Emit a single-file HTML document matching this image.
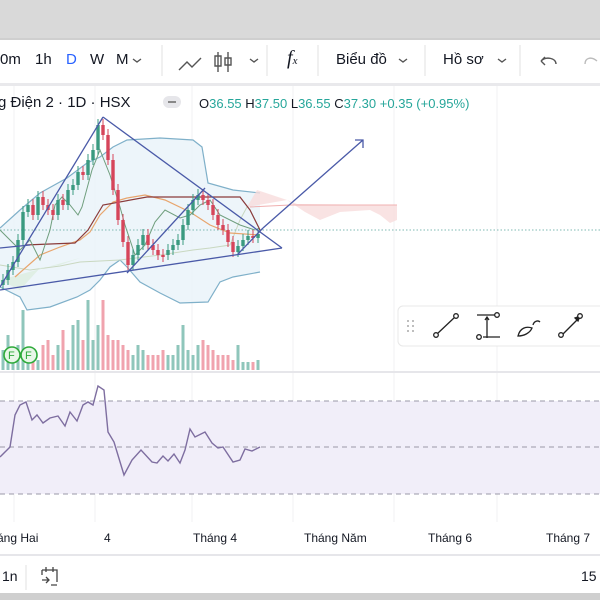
<!DOCTYPE html>
<html><head><meta charset="utf-8"><style>
body{margin:0;width:600px;height:600px;overflow:hidden;background:#fff;font-family:"Liberation Sans","Noto Sans CJK SC",sans-serif;position:relative}
.t{position:absolute;white-space:nowrap;color:#131722}
</style></head><body>
<div style="position:absolute;left:0;top:0;width:600px;height:38px;background:#d9d9d9"></div>
<div style="position:absolute;left:0;top:38px;width:600px;height:2px;background:#cfcfcf"></div>
<div style="position:absolute;left:0;top:83px;width:600px;height:3px;background:#e9e9ec"></div>
<div class="t" style="left:0;top:51px;font-size:15px">0m</div>
<div class="t" style="left:35px;top:51px;font-size:15px">1h</div>
<div class="t" style="left:66px;top:51px;font-size:15px;color:#2962ff">D</div>
<div class="t" style="left:90px;top:51px;font-size:15px">W</div>
<div class="t" style="left:116px;top:51px;font-size:15px">M</div>
<div class="t" style="left:336px;top:51px;font-size:15px">Biểu đồ</div>
<div class="t" style="left:443px;top:51px;font-size:15px">Hồ sơ</div>
<div class="t" style="left:287px;top:47px;font-size:20px;font-family:'Liberation Serif',serif;font-style:italic">f<span style="font-size:11px">x</span></div>
<svg style="position:absolute;left:0;top:0" width="600" height="600">
<g stroke="#555" stroke-width="1.4" fill="none">
<path d="M133 59l4 3 4-3M250 59l4 3 4-3M399 59l4 3 4-3M498 59l4 3 4-3"/>
<path d="M179 70l8-8 5 5 9-9"/>
<path d="M218 52v20M215 56h6v10h-6zM228 52v20M225 58h6v7h-6z"/>
<path d="M556 64c0-6-10-8-15-3M541 61l4-4M541 61l4 4"/>
<path d="M585 64c0-6 6-8 12-3" stroke="#bbb"/>
</g>
<g stroke="#e0e0e0"><line x1="162" y1="45" x2="162" y2="76"/><line x1="267" y1="45" x2="267" y2="76"/><line x1="318" y1="45" x2="318" y2="76"/><line x1="425" y1="45" x2="425" y2="76"/><line x1="520" y1="45" x2="520" y2="76"/></g>
<g stroke="#f0f0f3"><line x1="14" y1="86" x2="14" y2="522"/><line x1="95" y1="86" x2="95" y2="522"/><line x1="192" y1="86" x2="192" y2="522"/><line x1="293" y1="86" x2="293" y2="522"/><line x1="394" y1="86" x2="394" y2="522"/><line x1="497" y1="86" x2="497" y2="522"/><line x1="0" y1="372" x2="600" y2="372" stroke="#e6e6ea" stroke-width="2"/></g>
<path d="M0 228L20 210L40 193L67 178L87 163L100 157L113 147L127 140L160 138L193 140L202 147L208 183L233 190L260 193L260 272L233 277L220 282L208 302L180 303L160 293L140 282L127 267L120 260L110 267L100 280L90 290L77 297L50 307L27 310L20 297L0 287Z" fill="#e8f2f9" opacity=".8"/>
<path d="M0 228L20 210L40 193L67 178L87 163L100 157L113 147L127 140L160 138L193 140L202 147L208 183L233 190L260 193" fill="none" stroke="#7fb0c9" stroke-width="1.2"/>
<path d="M0 287L20 297L27 310L50 307L77 297L90 290L100 280L110 267L120 260L127 267L140 282L160 293L180 303L208 302L220 282L233 277L260 272" fill="none" stroke="#7fb0c9" stroke-width="1.2"/>
<path d="M247 207L257 190L287 200L297 204L397 205L397 220L390 223L380 215L370 210L340 212L320 220L305 212L287 200Z" fill="#f7dcdc" opacity=".8"/>
<path d="M250 207L290 205L397 205" fill="none" stroke="#f0b0b0"/>
<path d="M0 265L30 270L60 266L80 262L120 260L160 255L193 250L210 248L230 245L240 220L247 207" fill="none" stroke="#c9d8c0"/>
<path d="M0 280L20 290L40 268L60 265L80 258Z" fill="#dceee0" opacity=".8"/>
<line x1="0" y1="230" x2="600" y2="230" stroke="#7fb9b3" stroke-dasharray="1.5 2"/>
<path d="M15 277L40 255L60 247L80 240L90 232L100 215L113 202L127 198L145 195L165 200L190 212L210 225L230 233L260 235" fill="none" stroke="#e8a56d" stroke-width="1.2"/>
<path d="M25 245L75 243L88 230L103 205L147 197L240 197L250 210L260 230" fill="none" stroke="#8a3b3b" stroke-width="1.2"/>
<path d="M0 230L10 240L20 250L30 240L40 260L50 230L55 205L62 197L70 205L78 215L82 207L92 170L100 150L110 175L120 207L125 225L135 255L145 245L155 222L165 210L180 218L190 215L200 205L210 200L220 215L240 225L255 230" fill="none" stroke="#6f9e7d" stroke-width="1"/>
<g id="candles"></g>
<g id="vols"></g>
<g stroke="#4a5aa8" stroke-width="1.3" fill="none">
<path d="M0 290L282 248"/><path d="M103 117L282 248"/><path d="M0 287L103 117"/>
<path d="M127 273L205 188"/><path d="M238 254L263 228"/>
<path d="M263 228L363 140M355 140h8v8"/>
<path d="M0 248L30 245"/>
</g>
<g fill="#e8f7e8" stroke="#2eaa3a" stroke-width="1.6"><circle cx="12" cy="355" r="8"/><circle cx="29" cy="355" r="8"/></g>
<g font-size="11" fill="#2eaa3a" font-family="Liberation Sans"><text x="8" y="359">F</text><text x="25" y="359">F</text></g>
<rect x="0" y="401" width="600" height="93" fill="#f1eef9"/>
<g stroke="#9a98a8" stroke-dasharray="5 4"><line x1="0" y1="401" x2="600" y2="401"/><line x1="0" y1="447" x2="600" y2="447"/><line x1="0" y1="494" x2="600" y2="494"/></g>
<path d="M0 457L10 447L15 415L20 405L26 402L32 420L37 415L43 423L50 418L58 416L65 426L70 412L77 421L83 405L88 402L93 405L98 386L104 390L108 432L114 442L124 475L132 460L141 450L152 462L157 463L163 456L168 461L174 454L180 463L185 450L190 429L195 437L205 432L212 443L218 448L223 447L233 462L240 460L245 449L252 451L260 447" fill="none" stroke="#7e6ea0" stroke-width="1.4"/>
<line x1="0" y1="555" x2="600" y2="555" stroke="#e6e6ea" stroke-width="2"/>
<line x1="26" y1="565" x2="26" y2="590" stroke="#e0e0e0"/>
<g stroke="#444" stroke-width="1.3" fill="none"><path d="M42 570h15v12M42 570v5M46 567v5M53 567v5M42 580h7M46 577l3 3-3 3M51 585h6"/></g>
<rect x="0" y="593" width="600" height="7" fill="#cfcfcf"/>
<rect x="163" y="96" width="18" height="12" rx="6" fill="#e6e6ea"/><rect x="168" y="101" width="8" height="2" fill="#888"/>
<rect x="398" y="306" width="210" height="40" rx="5" fill="#fff" stroke="#e8e8e8"/>
<g fill="#aaa"><circle cx="408" cy="321" r="1"/><circle cx="413" cy="321" r="1"/><circle cx="408" cy="326" r="1"/><circle cx="413" cy="326" r="1"/><circle cx="408" cy="331" r="1"/><circle cx="413" cy="331" r="1"/></g>
<g stroke="#222" stroke-width="1.3" fill="#fff">
<path d="M437 334L455 317"/><circle cx="436" cy="335" r="2.3"/><circle cx="456" cy="316" r="2.3"/>
<path d="M477 315h19M487 338v-21M483 337h17M485 320l2-3 2 3"/><circle cx="497" cy="315" r="2.3"/><circle cx="479" cy="337" r="2.3"/>
<path d="M518 336c2-8 8-10 14-8c-2 5-8 8-14 8z"/><path d="M533 325c1-4 5-5 7-3" fill="none"/>
<path d="M562 335L579 318"/><path d="M575 318l5-2-2 5z" fill="#222"/><circle cx="561" cy="335" r="2.3"/><circle cx="580" cy="316" r="2.3"/>
</g>
</svg>
<div class="t" style="left:-2px;top:94px;font-size:15px">g Điện 2 · 1D · HSX</div>
<div class="t" style="left:199px;top:96px;font-size:13px">O<span style="color:#26a69a">36.55</span> H<span style="color:#26a69a">37.50</span> L<span style="color:#26a69a">36.55</span> C<span style="color:#26a69a">37.30</span> <span style="color:#26a69a">+0.35 (+0.95%)</span></div>
<div class="t" style="left:-3px;top:531px;font-size:12px">áng Hai</div>
<div class="t" style="left:104px;top:531px;font-size:12px">4</div>
<div class="t" style="left:193px;top:531px;font-size:12px">Tháng 4</div>
<div class="t" style="left:304px;top:531px;font-size:12px">Tháng Năm</div>
<div class="t" style="left:428px;top:531px;font-size:12px">Tháng 6</div>
<div class="t" style="left:546px;top:531px;font-size:12px">Tháng 7</div>
<div class="t" style="left:2px;top:568px;font-size:14px">1n</div>
<div class="t" style="left:581px;top:568px;font-size:14px">15</div>
<script>
var c=[280,270,262,240,212,205,215,197,205,210,215,200,205,190,185,172,175,160,150,125,135,160,190,220,242,265,255,245,235,245,250,255,255,250,245,240,225,210,200,195,200,205,215,225,230,242,252,246,240,236,238,234];
var s='',v='',vh=[20,35,15,25,60,15,20,10,25,30,15,25,40,20,45,50,30,70,30,45,70,35,30,30,25,20,15,25,20,15,15,15,20,15,15,25,45,20,15,25,30,25,20,15,15,15,10,25,8,8,8,10];
for(var i=0;i<c.length;i++){var x=3+i*5,o=i?c[i-1]:c[i]+5,cl=c[i],up=cl<o,col=up?'#3a9a80':'#d6455a';
var t=Math.min(o,cl),b=Math.max(o,cl);if(b-t<2)b=t+2;
s+='<line x1="'+x+'" x2="'+x+'" y1="'+(t-6)+'" y2="'+(b+5)+'" stroke="'+col+'"/><rect x="'+(x-1.7)+'" y="'+t+'" width="3.4" height="'+(b-t)+'" fill="'+col+'"/>';
v+='<rect x="'+(x-1.5)+'" y="'+(370-vh[i])+'" width="3" height="'+vh[i]+'" fill="'+(up?'#8fc6bb':'#f0a3ae')+'"/>';}
document.getElementById('candles').innerHTML=s;document.getElementById('vols').innerHTML=v;
</script>
</body></html>
